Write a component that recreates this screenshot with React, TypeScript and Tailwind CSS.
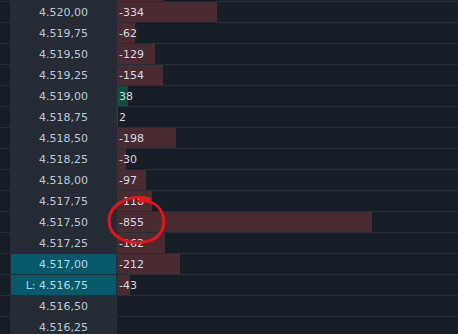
type Level = {
  price: string;
  value: number | null;
  highlight?: boolean;
};

const levels: Level[] = [
  { price: "4.520,00", value: -334 },
  { price: "4.519,75", value: -62 },
  { price: "4.519,50", value: -129 },
  { price: "4.519,25", value: -154 },
  { price: "4.519,00", value: 38 },
  { price: "4.518,75", value: 2 },
  { price: "4.518,50", value: -198 },
  { price: "4.518,25", value: -30 },
  { price: "4.518,00", value: -97 },
  { price: "4.517,75", value: -118 },
  { price: "4.517,50", value: -855 },
  { price: "4.517,25", value: -162 },
  { price: "4.517,00", value: -212, highlight: true },
  { price: "L: 4.516,75", value: -43, highlight: true },
  { price: "4.516,50", value: null },
  { price: "4.516,25", value: null },
];

const PX_PER_UNIT = 255 / 855;

function Row({ level }: { level: Level }) {
  const v = level.value;
  const width = v === null ? 0 : Math.round(Math.abs(v) * PX_PER_UNIT);

  return (
    <div className="flex h-[21px]">
      <div className="w-[10px] border-b border-[#252d37] bg-[#161d26]" />
      <div className="w-[107px] bg-[#262c35] pl-[1px] pr-[1px] pb-[1px]">
        <div
          className={
            level.highlight
              ? "flex h-full items-center justify-end bg-[#07596c] pr-[28px] text-[#a9dbea]"
              : "flex h-full items-center justify-end pr-[28px] text-[#bcc7d2]"
          }
        >
          {level.price}
        </div>
      </div>
      <div className="relative flex-1 border-b border-[#252d37] bg-[#161e28]">
        {width > 0 && (
          <div
            className={
              v !== null && v > 0
                ? "absolute inset-y-0 left-0 bg-[#0e4f3f]"
                : "absolute inset-y-0 left-0 bg-[#4a2b31]"
            }
            style={{ width }}
          />
        )}
        {v !== null && (
          <span className="relative flex h-full items-center pl-[2px] text-[#d2dae2]">
            {v}
          </span>
        )}
      </div>
    </div>
  );
}

export default function App() {
  return (
    <div
      className="relative h-[334px] w-[458px] overflow-hidden bg-[#161e28] text-[11px] leading-none"
      style={{ fontFamily: '"DejaVu Sans", sans-serif' }}
    >
      {/* row cut off at the top */}
      <div className="flex h-[2px]">
        <div className="w-[10px] border-b border-[#252d37] bg-[#161d26]" />
        <div className="w-[107px] bg-[#262c35]" />
        <div className="relative flex-1 border-b border-[#252d37] bg-[#161e28]">
          <div className="absolute inset-y-0 left-0 w-[46px] bg-[#4a2b31]" />
        </div>
      </div>

      {levels.map((l) => (
        <Row key={l.price} level={l} />
      ))}

      {/* hand drawn marker */}
      <svg
        className="pointer-events-none absolute left-0 top-0"
        width="458"
        height="334"
        viewBox="0 0 458 334"
        fill="none"
      >
        <path
          d="M150 199 C 131 193, 109 204, 109 221 C 109 237, 126 244, 144 242 C 159 240, 166 229, 163 216 C 160 205, 151 200, 139 201"
          stroke="#e3141c"
          strokeWidth="3"
          strokeLinecap="round"
        />
      </svg>
    </div>
  );
}
